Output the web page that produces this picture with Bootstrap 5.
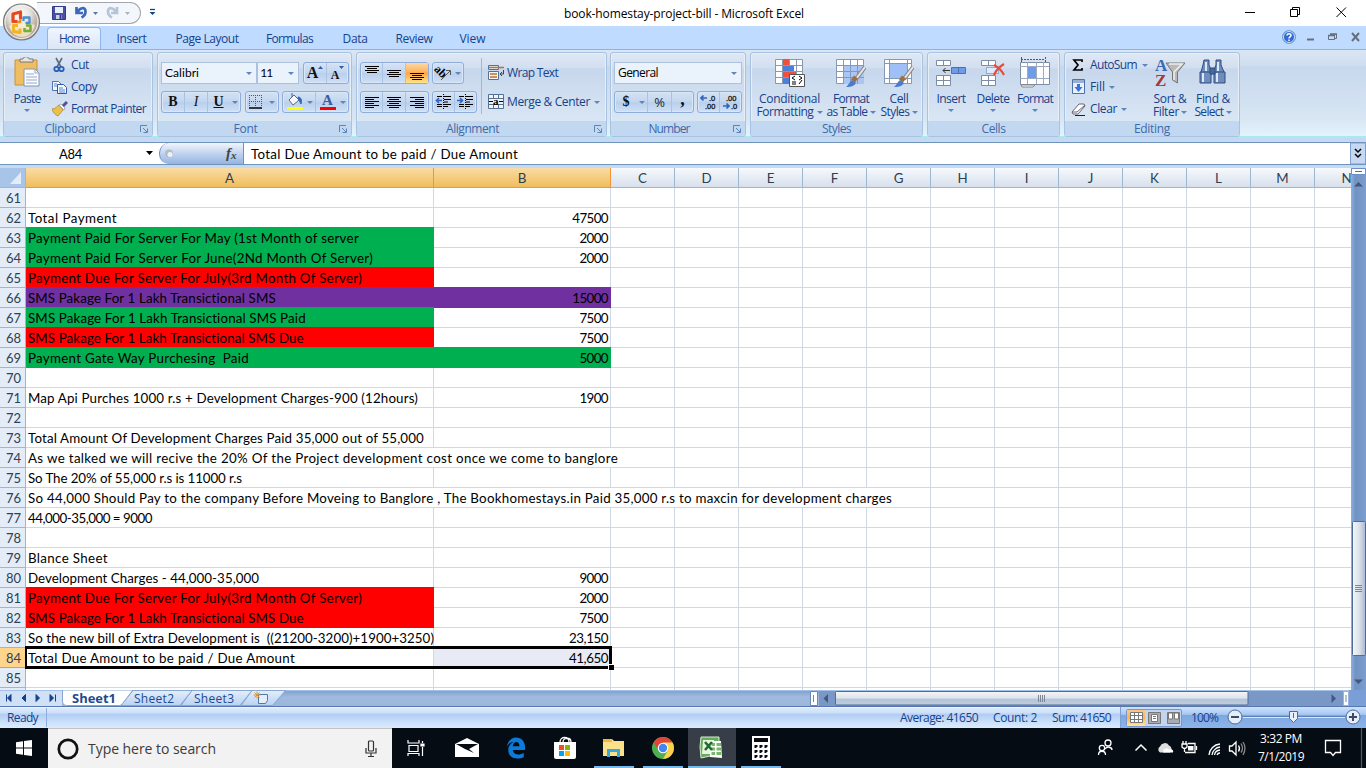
<!DOCTYPE html>
<html lang="en">
<head>
<meta charset="utf-8">
<title>book-homestay-project-bill - Microsoft Excel</title>
<link href="https://cdn.jsdelivr.net/npm/bootstrap@5.3.0/dist/css/bootstrap.min.css" rel="stylesheet">
<style>
body{width:1366px;height:768px;overflow:hidden;font:12px/14px "Open Sans","Noto Sans",sans-serif;color:#15428b;background:#fff}
svg{display:block;flex:none}
.fit{display:inline-block;white-space:nowrap;text-align:left}
.titlebar{height:26px;color:#000}
.orb{left:2px;top:2px;z-index:5}
.qat{width:104px;height:22px;margin:2px 0 0 37px;border:1px solid #a3a6ad;border-radius:0 12px 12px 0;background:#f3f6fb;border-left:0}
.apptabs{height:23px;background:#bfdbff}
.apptab{height:23px;padding-top:6px;text-align:center}
.apptab.on{height:22px;margin-top:1px;padding-top:4px;border:1px solid #8fb4e6;border-bottom:0;border-radius:4px 4px 0 0;background:linear-gradient(#eff6fe,#dbe7f6)}
.ribbon{height:89px;padding:2px 0 0 3px;gap:4px;background:linear-gradient(#dbe6f4,#cfddef 18%,#c7d8ed 19%,#d8e6f4 80%,#e3f4fd);border-top:1px solid #8db2e3;border-bottom:2px solid #a7eaf3}
.grp{height:85px;border:1px solid #a8c2e2;border-radius:3px;background:linear-gradient(#dfe8f5,#d2dff0 18%,#c7d7ec 19%,#d9e6f4 82%);box-shadow:inset 0 0 0 1px #e6eef8}
.grp .body{height:68px}
.grp .cap{height:15px;background:#c1d8f0;color:#3e6aaa;text-align:center;line-height:16px;position:relative;border-radius:0 0 3px 3px}
.launch{position:absolute;right:4px;top:4px}
.big{text-align:center;padding-top:4px;line-height:13px}
.big svg{margin:0 auto 3px}
.tri{display:inline-block;border:3px solid transparent;border-top:3px solid #5d86bd;border-bottom:0;vertical-align:middle;flex:none}
.sm{height:22px;display:flex;align-items:center}
.combo{height:22px;background:#eaf2fb;border:1px solid #abc1de;color:#000;display:flex;align-items:center;justify-content:space-between;padding:0 4px 0 3px}
.bg{height:22px;display:flex;border:1px solid #8eaddb;border-radius:3px;background:linear-gradient(#d4e2f4,#c3d6ef 50%,#b9cfec 51%,#cfe0f5);box-shadow:inset 0 0 0 1px #d9e7f8}
.bg>span{display:flex;align-items:center;justify-content:center;border-right:1px solid #a9c3e5}
.bg>span:last-child{border-right:0}
.bg>span.nb{border-right:0}
.bg .hot{background:linear-gradient(#fdd9a5,#fdb25c 45%,#fca43c 50%,#ffe48a)}
.ser{font-family:"Liberation Serif",serif;color:#111}
.sans{font-family:"Lato","Liberation Sans",sans-serif}
.fbar{height:30px;background:#c5d9f1;padding:4px 0 4px;color:#000}
.fbar .in{height:23px;border-top:1px solid #6e93bd;border-bottom:1px solid #6e93bd;background:#fff}
.fxbox{width:85px;height:21px;border-radius:10px 0 0 10px;background:linear-gradient(#f0f5fc,#b7cdec 60%,#95b4df);border-left:1px solid #6f8fc0;border-right:1px solid #6e93bd}
.sheet{height:522px;overflow:hidden;font-family:"Lato","Liberation Sans",sans-serif;font-size:13.33px;color:#000}
.xrow{display:grid;grid-template-columns:26px 408px 177px repeat(11,64px) 64px;height:20px;width:1443px}
.xrow>div{border-right:1px solid #d0d7e5;border-bottom:1px solid #d0d7e5;line-height:20px;height:20px;white-space:pre;padding-left:2px}
.xrow>.rh{background:#e4ecf7;border-color:#9eb6ce;color:#2d4152;padding:0 4px 0 0;text-align:right;font-size:13px}
.xrow>.rh.sel{background:#ffd58d;border-color:#f29536}
.hdr>div{background:linear-gradient(#f6f9fc,#d8e0ec);border-color:#9eb6ce!important;text-align:center;color:#2d4152;padding:0}
.hdr>.sel{background:linear-gradient(#f9dca5,#f0bd5c);border-color:#f29536!important}
.hdr>.corner{background:#a9c4e9;padding:0}
.xrow>.num{text-align:right;padding-right:2px}
.xrow>.fill{margin-top:-1px;height:21px;border:0;padding-top:1px}
.xrow>.num.fill{padding-right:3px}
.green{background:#00b050}.redc{background:#f00}.purp{background:#7030a0}
.selbox{left:25px;top:478px;width:587px;height:23px;border:3px solid #000;border-left-width:2px;z-index:2}
.selbox i{position:absolute;right:-5px;bottom:-4px;width:6px;height:6px;background:#000;border:1px solid #fff;border-right:0;border-bottom:0}
.vs{width:15px;height:522px;background:linear-gradient(90deg,#8fb0dd,#6f93c4 30%,#7c9dcd)}
.hs{height:17px;background:linear-gradient(#7c9fce,#9fb9df 40%,#9db6dc)}
.status{height:21px;background:linear-gradient(#fff 0,#dceafc 1px,#cde0f8 28%,#b1cdf3 35%,#c9dffb 70%,#dcebfd);font-size:12px}
.zoombar{width:246px;height:21px;background:linear-gradient(#cfe2fb,#a7c8f3 35%,#7fa8e0 40%,#8db4ea);border-left:1px solid #7d9fd1}
.views{width:56px;height:18px;border:1px solid #7795c9;border-radius:2px;background:#c3d5ee}
.task{height:40px;background:#060c14;color:#fff}
.search{width:344px;height:40px;background:#f2f2f2;border-top:1px solid #c4c4c4;color:#3b3b3b}
.ti{width:49px;height:40px;display:flex;align-items:center;justify-content:center;position:relative}
.ti svg{margin-right:2px}
.ti.run:after{content:"";position:absolute;left:4px;right:5px;bottom:0;height:2px;background:#76b9ed}
.ti.act{background:#383e48;width:48px}.ti.act:after{left:0;right:0}
</style>
</head>
<body class="d-flex flex-column position-relative">

<!-- Office button -->
<div class="orb position-absolute">
<svg width="40" height="40" viewBox="0 0 40 40"><defs><radialGradient id="ob" cx=".45" cy=".3"><stop offset="0" stop-color="#fff"/><stop offset=".6" stop-color="#e6e2de"/><stop offset="1" stop-color="#b9aea4"/></radialGradient></defs>
<circle cx="19.500" cy="20" r="18" fill="url(#ob)" stroke="#77797c" stroke-width="1.200"/><circle cx="19.500" cy="20" r="16.500" fill="none" stroke="#f7f4ee" stroke-width="1"/>
<path d="M7 24c4-3 20-4 26-1-2 8-7 12-13 12S9 31 7 24z" fill="#fff3c9" opacity=".7"/>
<g fill="none" stroke-linejoin="round"><path d="M15.500 19.500h-4.500v-7.500l7.500-2v7" stroke="#e8491b" stroke-width="3.200"/><path d="M15 20h3l.5-3" stroke="#f08a1c" stroke-width="2.400"/><path d="M21.500 19v-3.500h6v5.500h-4" stroke="#4b8fd0" stroke-width="2.300"/><path d="M16 23.500h-4.500v6l6.500 1v-4" stroke="#f5b31c" stroke-width="2.800"/><path d="M24 23.500h4.500v5.500h-6v-3" stroke="#79ab3c" stroke-width="2.500"/></g></svg>
</div>

<!-- Title bar -->
<header class="titlebar d-flex">
<div class="qat d-flex align-items-center flex-shrink-0">
<svg width="104" height="20" viewBox="37 3 104 20"><path d="M52.500 6.500h13v13h-13z" fill="#4a50a8" stroke="#333a8c"/><path d="M55 7h8v6h-8z" fill="#e9edf7"/><path d="M56 15h6v4h-6z" fill="#ccd2e8"/><path d="M59.500 15h2v4h-2z" fill="#333a8c"/>
<path d="M76.500 7v6h6.500M77.500 12.500c2-5 8-6 8-1 0 3-2 5-4 6" fill="none" stroke="#3b68b8" stroke-width="2.700"/><path d="M93 12h5l-2.500 3z" fill="#5878a8"/>
<path d="M117 7v6h-6M116 12.500c-2-5-8-6-8-1 0 3 2 5 4 6" fill="none" stroke="#b6c4d9" stroke-width="2.700"/><path d="M125 12h5l-2.500 3z" fill="#a9b3c3"/></svg>
</div>
<svg class="ms-2" width="8" height="26" viewBox="149 0 8 26"><path d="M150 9.500h5" stroke="#15428b" stroke-width="1.300"/><path d="M149.500 12h6l-3 3z" fill="#15428b"/></svg>
<div style="margin-left:407px" class="pt-2 flex-grow-1"><span class="fit" data-w="240" style="position:relative;top:-1px">book-homestay-project-bill - Microsoft Excel</span></div>
<svg width="128" height="26" viewBox="1238 0 128 26" fill="none" stroke="#000"><path d="M1245 12.500h10M1290.500 9.500h7v7h-7zM1292.500 9v-1.500h7v7H1298M1336.500 7.500l9.500 9.500M1346 7.500l-9.500 9.500"/></svg>
</header>

<!-- Ribbon tabs -->
<nav class="apptabs d-flex flex-shrink-0">
<div class="apptab on" style="margin-left:47px;width:54px"><span class="fit" data-w="30">Home</span></div>
<div class="apptab" style="width:61px"><span class="fit" data-w="30">Insert</span></div>
<div class="apptab" style="width:90px"><span class="fit" data-w="63">Page Layout</span></div>
<div class="apptab" style="width:75px"><span class="fit" data-w="47">Formulas</span></div>
<div class="apptab" style="width:56px"><span class="fit" data-w="25">Data</span></div>
<div class="apptab" style="width:62px"><span class="fit" data-w="37">Review</span></div>
<div class="apptab" style="width:55px"><span class="fit" data-w="26">View</span></div>
<svg class="ms-auto" width="88" height="23" viewBox="1278 26 88 23"><circle cx="1289" cy="37" r="6.500" fill="#2f6bd0" stroke="#7aa0d8"/><circle cx="1289" cy="37" r="5.500" fill="none" stroke="#cfe0fa"/><path d="M1287 35.500c0-2.500 4-2.500 4 0 0 1.500-2 1.300-2 3M1289 39.500v1.500" stroke="#fff" stroke-width="1.500" fill="none"/><g stroke="#66707c" fill="none"><path d="M1307 39.500h7" stroke-width="2"/><path d="M1328.500 35.500h6v4h-6zM1330.500 34.500h6v4H1335" /><path d="M1328 35.500h7M1330 34h7" stroke-width="1.500"/><path d="M1352 33l7 8M1359 33l-7 8" stroke-width="2"/></g></svg>
</nav>

<!-- Ribbon -->
<section class="ribbon d-flex flex-shrink-0">
<div class="grp flex-shrink-0" style="width:150px">
<div class="body d-flex">
<div class="big" style="width:46px"><svg width="32" height="32" viewBox="0 0 32 32"><path d="M4 3h22v25H4z" fill="#efbe62" stroke="#c7923c"/><path d="M9 5V2h3c0-3 6-3 6 0h4v3z" fill="#e5e5e6" stroke="#777"/><path d="M13 12h11l4 4v13H13z" fill="#fafcff" stroke="#8296b6"/><path d="M24 12v4h4M15 17h8m-8 3h11m-11 3h11m-11 3h11" fill="none" stroke="#9aaac5"/></svg><span class="fit" data-w="27">Paste</span><br><i class="tri" style="margin-top:-5px"></i></div>
<div style="padding:1px 0 0 2px">
<div class="sm"><svg width="16" height="16" viewBox="0 0 16 16" fill="none"><path d="M4 1l5 9M10 1L5 10" stroke="#5d6b7c" stroke-width="1.600"/><circle cx="4.500" cy="12" r="2.200" stroke="#2b5fb3" stroke-width="1.800"/><circle cx="9.500" cy="12" r="2.200" stroke="#2b5fb3" stroke-width="1.800"/></svg><span class="fit" style="margin-left:3px" data-w="18">Cut</span></div>
<div class="sm"><svg width="16" height="16" viewBox="0 0 16 16"><path d="M.5 2.500h6l3 3v6h-9z" fill="#f3f8ff" stroke="#4e73ad"/><path d="M5.500 5.500h6l3 3v6h-9z" fill="#f3f8ff" stroke="#2f5aa5"/><path d="M2 5h3M2 7h3M7 9h4m-4 2h6m-6 2h6" stroke="#5b87cc"/></svg><span class="fit" style="margin-left:3px" data-w="26">Copy</span></div>
<div class="sm"><svg width="16" height="16" viewBox="0 0 16 16"><path d="M0 8c4 0 5-3 7-4l4 5-5 6c-3-1-5-4-6-7z" fill="#e9c14f" stroke="#b28b26" stroke-width=".8"/><path d="M7 4l5 5 1-2-4-4z" fill="#fff" stroke="#8c8c8c" stroke-width=".7"/><path d="M11 5l4-4" stroke="#5550a0" stroke-width="3"/></svg><span class="fit" style="margin-left:3px" data-w="75">Format Painter</span></div>
</div></div>
<div class="cap"><span class="fit" data-w="51" style="margin-right:16px">Clipboard</span><svg class="launch" width="8" height="8"><path d="M.5 7V.5H7M3 3l4 4M7.500 3.500v4h-4" fill="none" stroke="#5c84b6"/></svg></div>
</div>

<div class="grp flex-shrink-0" style="width:195px">
<div class="body" style="padding:9px 2px 0 3px">
<div class="d-flex">
<div class="combo sans" style="width:97px"><span class="fit" data-w="34">Calibri</span><i class="tri"></i></div>
<div class="combo" style="width:42px;padding-left:2px"><span class="fit sans" data-w="12">11</span><i class="tri"></i></div>
<div class="bg" style="width:46px;margin-left:4px"><span class="ser fw-bold" style="width:23px;font-size:16px">A<svg width="5" height="14"><path d="M0 3h5L2.500 0z" fill="#2d5fa8"/></svg></span><span class="ser fw-bold" style="width:21px;font-size:12px;padding-top:3px">A<svg width="5" height="18"><path d="M0 0h5L2.500 3z" fill="#2d5fa8"/></svg></span></div>
</div>
<div class="d-flex" style="margin-top:7px">
<div class="bg ser" style="width:80px;font-size:14px"><span class="fw-bold" style="width:23px">B</span><span class="fst-italic" style="width:23px">I</span><span class="fw-bold text-decoration-underline nb" style="width:21px">U</span><span style="width:11px"><i class="tri"></i></span></div>
<div class="bg" style="width:34px;margin-left:4px"><span class="nb" style="width:20px"><svg width="14" height="14"><path d="M.5 0v12M6.500 0v12M12.500 0v12M0 .5h13M0 6.500h13" stroke="#555" stroke-dasharray="1 1"/><path d="M0 13h13" stroke="#000" stroke-width="1.500"/></svg></span><span style="width:12px"><i class="tri"></i></span></div>
<div class="bg" style="width:67px;margin-left:3px"><span class="nb" style="width:22px"><svg width="17" height="18"><path d="M3 7l5-5 5 5-6 5z" fill="#f6f8fb" stroke="#5c6b80"/><path d="M6 4V0M12 4c3 0 4 3 3 7l-2-4z" fill="#3067b6" stroke="#3067b6"/><path d="M1 14h16v3H1z" fill="#ff0"/></svg></span><span style="width:11px"><i class="tri"></i></span><span class="nb" style="width:22px"><svg width="17" height="18"><text x="3" y="12" font-family="Liberation Serif" font-weight="bold" font-size="15" fill="#365f9e">A</text><path d="M1 14h16v3H1z" fill="red"/></svg></span><span style="width:10px"><i class="tri"></i></span></div>
</div></div>
<div class="cap"><span class="fit" data-w="24" style="margin-right:18px">Font</span><svg class="launch" width="8" height="8"><path d="M.5 7V.5H7M3 3l4 4M7.500 3.500v4h-4" fill="none" stroke="#5c84b6"/></svg></div>
</div>

<div class="grp flex-shrink-0" style="width:251px">
<div class="body d-flex" style="padding:9px 2px 0 3px">
<div>
<div class="d-flex">
<div class="bg" style="width:69px"><span style="width:22px"><svg width="14" height="16" stroke="#000"><path d="M0 1.500h14M2 3.500h10M0 5.500h14M2 7.500h10"/></svg></span><span style="width:23px"><svg width="14" height="16" stroke="#000"><path d="M0 5.500h14M2 7.500h10M0 9.500h14M2 11.500h10"/></svg></span><span class="hot" style="width:22px"><svg width="14" height="16" stroke="#000"><path d="M0 8.500h14M2 10.500h10M0 12.500h14M2 14.500h10"/></svg></span></div>
<div class="bg" style="width:32px;margin-left:3px"><span class="nb" style="width:19px"><svg width="18" height="18"><text transform="rotate(45 3 5)" x="1" y="8" font-family="Liberation Serif" font-weight="bold" font-size="12">ab</text><path d="M7 16l9-9M12 6.500h4.500V11" stroke="#555" fill="none"/></svg></span><span style="width:11px"><i class="tri"></i></span></div></div>
<div class="d-flex" style="margin-top:7px">
<div class="bg" style="width:69px"><span style="width:22px"><svg width="14" height="13" stroke="#000"><path d="M0 1.500h14M0 3.500h9M0 5.500h14M0 7.500h9M0 9.500h14M0 11.500h9"/></svg></span><span style="width:23px"><svg width="14" height="13" stroke="#000"><path d="M0 1.500h14M2 3.500h10M0 5.500h14M2 7.500h10M0 9.500h14M2 11.500h10"/></svg></span><span style="width:22px"><svg width="14" height="13" stroke="#000"><path d="M0 1.500h14M5 3.500h9M0 5.500h14M5 7.500h9M0 9.500h14M5 11.500h9"/></svg></span></div>
<div class="bg" style="width:45px;margin-left:3px"><span style="width:22px"><svg width="17" height="16" stroke="#000"><path d="M2 2.500h5M9 2.500h7M9 5.500h7M9 8h4M2 10.500h5M9 10.500h7M2 12.500h5M9 12.500h4"/><path d="M8.500 0v15" stroke-dasharray="1 1"/><path d="M7 6.500H1m3-2.500L1.500 6.500 4 9" stroke="#2f63bd" stroke-width="1.600" fill="none"/></svg></span><span style="width:21px"><svg width="17" height="16" stroke="#000"><path d="M2 2.500h5M9 2.500h7M9 5.500h7M9 8h4M2 10.500h5M9 10.500h7M2 12.500h5M9 12.500h4"/><path d="M8.500 0v15" stroke-dasharray="1 1"/><path d="M0 6.500h6M3 4l2.500 2.500L3 9" stroke="#2f63bd" stroke-width="1.600" fill="none"/></svg></span></div></div>
</div>
<div style="margin:-4px 0 0 4px;width:1px;height:56px;background:#9cb8da"></div>
<div style="margin-left:6px">
<div class="sm"><svg width="17" height="16"><path d="M.5.500h10v4H.5zM.5 6.500h10v8H.5z" fill="#eef4fc" stroke="#56708f"/><path d="M1 2.500h15M2 9h7M2 12h7" stroke="#c06f2d" stroke-width="1.300"/><path d="M15.500 5v4H12M14 7l-2 2 2 2" stroke="#345" fill="none"/></svg><span class="fit" data-w="51" style="margin-left:2px">Wrap Text</span></div>
<div class="sm" style="margin-top:7px"><svg width="17" height="16"><path d="M.5.500h15v14H.5zM.5 4.500h15M.5 10.500h15M5.500.500v4M10.500.500v4M5.500 10.500v4M10.500 10.500v4" fill="#eef4fc" stroke="#56708f"/><path d="M1 7.500h4M11 7.500h4" stroke="#000"/><text x="5" y="10.500" font-family="Liberation Serif" font-weight="bold" font-size="11">a</text></svg><span class="fit" data-w="83" style="margin:0 4px 0 2px">Merge &amp; Center</span><i class="tri"></i></div>
</div></div>
<div class="cap"><span class="fit" data-w="53" style="margin-right:18px">Alignment</span><svg class="launch" width="8" height="8"><path d="M.5 7V.5H7M3 3l4 4M7.500 3.500v4h-4" fill="none" stroke="#5c84b6"/></svg></div>
</div>

<div class="grp flex-shrink-0" style="width:136px;margin-left:-1px">
<div class="body" style="padding:9px 2px 0 3px">
<div class="combo" style="width:128px"><span class="fit" data-w="40">General</span><i class="tri"></i></div>
<div class="d-flex" style="margin-top:7px">
<div class="bg" style="width:80px"><span class="nb ser fw-bold" style="width:22px;font-size:14px">$</span><span style="width:11px"><i class="tri"></i></span><span style="width:24px;font-size:13px;color:#222">%</span><span class="ser fw-bold" style="width:21px;font-size:18px;padding-bottom:7px">,</span></div>
<div class="bg" style="width:45px;margin-left:3px"><span style="width:22px"><svg width="18" height="16" font-family="Liberation Sans" font-size="7.500" stroke="#222" stroke-width=".3"><text x="9" y="7">.0</text><text x="5" y="15">.00</text><path d="M1 4h6M3.500 1.500L1 4l2.500 2.500" stroke="#2f63bd" stroke-width="1.700" fill="none"/></svg></span><span style="width:21px"><svg width="18" height="16" font-family="Liberation Sans" font-size="7.500" stroke="#222" stroke-width=".3"><text x="4" y="7">.00</text><text x="9" y="15">.0</text><path d="M1 12h6M4.500 9.500L7 12l-2.500 2.500" stroke="#2f63bd" stroke-width="1.700" fill="none"/></svg></span></div></div></div>
<div class="cap"><span class="fit" data-w="41" style="margin-right:18px">Number</span><svg class="launch" width="8" height="8"><path d="M.5 7V.5H7M3 3l4 4M7.500 3.500v4h-4" fill="none" stroke="#5c84b6"/></svg></div>
</div>

<div class="grp flex-shrink-0" style="width:173px">
<div class="body d-flex" style="margin-right:-2px">
<div class="big" style="width:75px;padding-left:2px"><svg width="30" height="32"><path d="M.5 2.500h27v24H.5z" fill="#fff" stroke="#8698b2"/><path d="M7.500 2v25M14.500 2v25M21.500 2v25M0 8.500h28M0 14.500h28M0 20.500h28" stroke="#8698b2"/><path d="M8 2h6v6H8zM8 15h13v5H8z" fill="#f0503a"/><path d="M8 9h11v5H8zM8 21h6v6H8z" fill="#4c7fdb"/><path d="M14.500 17.500h15v12h-15z" fill="#fff" stroke="#555"/><path d="M20 19l-3 2 3 2M17 25h4M17 27h4M24 19l3 2-3 2M24 27l3-4" fill="none" stroke="#000"/></svg><span class="fit" data-w="61">Conditional</span><br><span class="fit" data-w="57">Formatting</span> <i class="tri"></i></div>
<div class="big" style="width:50px"><svg width="30" height="32"><path d="M.5 2.500h27v24H.5z" fill="#fff" stroke="#8698b2"/><path d="M7 9h21v18H7z" fill="#a9c6f5"/><path d="M7.500 2v25M14.500 2v25M21.500 2v25M0 8.500h28M0 14.500h28M0 20.500h28" stroke="#7c99c8"/><path d="M29 10L20 22" stroke="#888" stroke-width="4"/><path d="M29 10L20 22" stroke="#e8e8e8" stroke-width="2"/><path d="M20 20l-3 4" stroke="#a0703c" stroke-width="5"/><path d="M16 23l4 3c-2 4-7 4-10 4 3-2 3-5 6-7z" fill="#4b7ccb"/></svg><span class="fit" data-w="36">Format</span><br><span class="fit" data-w="41">as Table</span> <i class="tri" style="margin-left:-1px"></i></div>
<div class="big" style="width:46px"><svg width="30" height="32"><path d="M.5 2.500h27v24H.5z" fill="#fff" stroke="#8698b2"/><path d="M5.500 2v25M23.500 2v25M0 6.500h28M0 21.500h28" stroke="#8698b2"/><path d="M6 7h17v14H6z" fill="#9fc0f7"/><path d="M29 10L20 22" stroke="#888" stroke-width="4"/><path d="M29 10L20 22" stroke="#e8e8e8" stroke-width="2"/><path d="M20 20l-3 4" stroke="#a0703c" stroke-width="5"/><path d="M16 23l4 3c-2 4-7 4-10 4 3-2 3-5 6-7z" fill="#4b7ccb"/></svg><span class="fit" data-w="19">Cell</span><br><span class="fit" data-w="29">Styles</span> <i class="tri" style="margin-left:-1px"></i></div>
</div>
<div class="cap"><span class="fit" data-w="29">Styles</span></div>
</div>

<div class="grp flex-shrink-0" style="width:133px">
<div class="body d-flex ps-1" style="margin-left:-2px">
<div class="big" style="width:42px"><svg width="30" height="32"><g fill="#fff" stroke="#7c8da5"><path d="M.5 3.500h14v5H.5zM7.500 3v6M.5 18.500h14v10H.5zM.5 23.500h14M7.500 18v11"/></g><path d="M15.500 10.500h14v6h-14z" fill="#6f9be8" stroke="#4d70b5"/><path d="M22.500 10v7" stroke="#4d70b5"/><path d="M7 13.500h7M9.500 11L7 13.500 9.500 16" stroke="#333" fill="none"/></svg><span class="fit" data-w="29">Insert</span><br><i class="tri" style="margin-top:-5px"></i></div>
<div class="big" style="width:42px"><svg width="28" height="32"><g fill="#fff" stroke="#7c8da5"><path d="M2.500 3.500h14v5h-14zM9.500 3v6M2.500 18.500h14v10h-14zM2.500 23.500h14M9.500 18v11"/></g><path d="M7.500 10.500h12v6h-12z" fill="#dfeafa" stroke="#4d70b5" stroke-dasharray="1 1"/><path d="M15 8c4 2 8 6 10 10M25 7c-5 3-8 6-10 11" stroke="#ea4b34" stroke-width="2.200" fill="none"/></svg><span class="fit" data-w="33">Delete</span><br><i class="tri" style="margin-top:-5px"></i></div>
<div class="big" style="width:42px"><svg width="32" height="32"><path d="M1.500 5.500h29v22h-29z" fill="#fff" stroke="#7c8da5"/><path d="M8.500 5v22M17.500 5v22M24.500 5v22M1 9.500h29M1 21.500h29" stroke="#9cabc0"/><path d="M9 10h8v11H9z" fill="#6f9be8"/><path d="M2 28h14l-2 2H3z" fill="#fff" stroke="#888"/><path d="M2 2.500h24M2.500 0v5M26.500 0v5" stroke="#556" stroke-dasharray="2 1"/></svg><span class="fit" data-w="36">Format</span><br><i class="tri" style="margin-top:-5px"></i></div>
</div>
<div class="cap"><span class="fit" data-w="24">Cells</span></div>
</div>

<div class="grp flex-shrink-0" style="width:176px">
<div class="body d-flex">
<div style="width:84px;padding:1px 0 0 6px">
<div class="sm"><svg width="16" height="16"><path d="M11 5V3H3l4 5-4 5h8v-2" fill="none" stroke="#000" stroke-width="1.700"/></svg><span class="fit" data-w="47" style="margin:0 5px 0 3px">AutoSum</span><i class="tri"></i></div>
<div class="sm"><svg width="16" height="16"><path d="M1.500.500h12v14h-12z" fill="#e8f0fb" stroke="#4c70aa"/><path d="M2 1h11v3H2z" fill="#4c70aa" opacity=".5"/><path d="M6 5h3v3h2.500l-4 5-4-5H6z" fill="#3b74d8"/></svg><span class="fit" data-w="15" style="margin:0 4px 0 3px">Fill</span><i class="tri"></i></div>
<div class="sm"><svg width="16" height="16"><path d="M1 11l7-8h5l1 2-7 8H2z" fill="#fff" stroke="#667"/><path d="M1 11h5l8-7" fill="none" stroke="#667"/><path d="M4 14.500h10" stroke="#222"/></svg><span class="fit" data-w="27" style="margin:0 4px 0 3px">Clear</span><i class="tri"></i></div>
</div>
<div class="big" style="width:42px"><svg width="32" height="32"><g font-family="Liberation Serif" font-weight="bold" font-size="17"><text x="1" y="14" fill="#3a68b8">A</text><text x="1" y="29" fill="#a33a36">Z</text></g><path d="M12 6h19L23.500 15v11l-5-3v-8z" fill="#b9b9b9" stroke="#777"/><path d="M15 7h13l-8 8v8" fill="none" stroke="#eee" stroke-width="1.500"/></svg><span class="fit" data-w="33">Sort &amp;</span><br><span class="fit" data-w="26">Filter</span> <i class="tri" style="margin-left:-1px"></i></div>
<div class="big" style="width:44px"><svg width="30" height="32"><g fill="#6f8dbb" stroke="#2f4d80"><path d="M6 3h5v5l2 5v5H3v-3l2-7zM18 3h5v5l3 7v3H16v-5l2-5z"/><path d="M2 15h11v11H2zM16 15h11v11H16z"/><path d="M12 11h5v6h-5z" fill="#49689c"/></g><path d="M5 16v9M8 5v9M19 16v9M20 5v9" stroke="#dce7f7" stroke-width="2"/></svg><span class="fit" data-w="34">Find &amp;</span><br><span class="fit" data-w="29">Select</span> <i class="tri" style="margin-left:-1px"></i></div>
</div>
<div class="cap"><span class="fit" data-w="36">Editing</span></div>
</div>
</section>

<!-- Formula bar -->
<section class="fbar flex-shrink-0">
<div class="in d-flex align-items-center sans">
<span class="fit" data-w="23" style="margin-left:59px;font-size:13px">A84</span>
<svg style="margin-left:63px" width="9" height="5"><path d="M1 0h7L4.500 4z"/></svg>
<div class="fxbox d-flex align-items-center" style="margin-left:5px"><svg width="83" height="20"><circle cx="9" cy="9.500" r="4" fill="#b3bccb"/><circle cx="10" cy="10.500" r="2.500" fill="#eef2f8"/><text x="66" y="14" font-family="Liberation Serif" font-style="italic" font-weight="bold" font-size="15" fill="#444">f</text><text x="71" y="15" font-family="Liberation Serif" font-style="italic" font-weight="bold" font-size="11" fill="#444">x</text></svg></div>
<span class="fit" data-w="267" style="margin-left:7px;font-size:13.330px">Total Due Amount to be paid / Due Amount</span>
<svg class="ms-auto" width="16" height="21"><path d="M.5 0h15v21H.5z" fill="#c6d9f2" stroke="#7f9fcc"/><path d="M5 6l3 3 3-3M5 11l3 3 3-3" stroke="#000" stroke-width="1.500" fill="none"/></svg>
</div></section>

<!-- Worksheet -->
<main class="d-flex flex-shrink-0">
<div class="sheet flex-grow-1 position-relative" style="width:1351px">
<div id="grid"></div>
<div class="selbox position-absolute"><i></i></div>
</div>
<svg class="vs" width="15" height="522"><defs><linearGradient id="vt"><stop offset="0" stop-color="#f4f6f9"/><stop offset=".5" stop-color="#dde3ec"/><stop offset="1" stop-color="#a9b8cd"/></linearGradient></defs><path d="M.5.500h14v6H.5z" fill="#fff" stroke="#6b8fc6"/><path d="M4 3.500h7" stroke="#4a6fa8"/><path d="M3 18.500h9L7.500 14zM3 511.500h9L7.500 516z" fill="#47577a"/><rect x="1.500" y="353.500" width="13" height="134" rx="1" fill="url(#vt)" stroke="#4f6c9c"/><path d="M4 417.500h7M4 419.500h7M4 421.500h7M4 423.500h7" stroke="#7d8797"/></svg>
</main>

<!-- Sheet tabs and horizontal scrollbar -->
<div class="hs flex-shrink-0">
<svg width="1366" height="17"><defs><linearGradient id="ht" x2="0" y2="1"><stop offset="0" stop-color="#f4f6f9"/><stop offset=".5" stop-color="#dce2eb"/><stop offset=".55" stop-color="#b4c3d8"/><stop offset="1" stop-color="#c0cddd"/></linearGradient><linearGradient id="tb" x2="0" y2="1"><stop offset="0" stop-color="#e2eefc"/><stop offset="1" stop-color="#bad2f3"/></linearGradient></defs>
<path d="M0 0h1351" stroke="#a3c0e8" stroke-width="2"/><path d="M0 1h62v15H0z" fill="#cfe0f7"/>
<path d="M6.500 4.500v7M11 4.500v7L7.500 8zM25.500 4.500v7L22 8zM36 4.500v7L39.500 8zM50 4.500v7L53.500 8zM55.500 4.500v7" fill="#15428b" stroke="#15428b"/>
<g stroke="#8aa7cf" fill="url(#tb)"><path d="M241 15.500l11-15h33.500l-13 15z"/><path d="M181 15.500l11-15h60l-12 15z"/><path d="M121 15.500l12-15h59l-12 15z"/></g>
<path d="M62.500 0v12q0 3.500 4 3.500h53q2 0 3-2L133 0z" fill="#fff" stroke="#8aa7cf"/>
<g font-family="Open Sans" font-size="12" fill="#1f4a90"><text x="72" y="12.500" font-weight="bold" textLength="44" lengthAdjust="spacingAndGlyphs">Sheet1</text><text x="134" y="12.500" textLength="40">Sheet2</text><text x="194" y="12.500" textLength="40">Sheet3</text></g>
<path d="M258.500 4.500h9v6l-2 3h-7z" fill="#e5edf8" stroke="#5577a8"/><path d="M257 1.500v7M253.500 5h7M254.500 2.500l5 5M259.500 2.500l-5 5" stroke="#e09526"/>
<path d="M819 1h532v15H819z" fill="#7998c6"/><path d="M810.500 1.500h7v14h-7z" fill="#fff" stroke="#6788b8"/><path d="M813.500 5v7" stroke="#6788b8"/><path d="M828 4v9l-4.500-4.500z" fill="#47577a"/><rect x="835.500" y="1.500" width="412.500" height="13.500" rx="1" fill="url(#ht)" stroke="#4f6c9c"/><path d="M1038.500 5v7M1040.500 5v7M1042.500 5v7M1044.500 5v7" stroke="#7d8797"/><path d="M1331.500 4v9l4.500-4.500z" fill="#47577a"/><path d="M1343.500 1.500h5v14h-5z" fill="#fff" stroke="#9ab6dd"/><path d="M1346 5v7" stroke="#6788b8"/><path d="M1349 0h17v17h-17z" fill="#7b9ed6"/><path d="M0 16.500h1366" stroke="#5578b0"/></svg>
</div>

<!-- Status bar -->
<div class="status d-flex align-items-center flex-shrink-0">
<span class="fit" data-w="31" style="margin-left:7px">Ready</span><div style="width:1px;height:19px;margin-left:8px;background:#8eaedb"></div>
<span class="fit" data-w="78" style="margin-left:853px">Average: 41650</span><span class="fit" data-w="44" style="margin-left:15px">Count: 2</span><span class="fit" data-w="59" style="margin-left:15px">Sum: 41650</span>
<div class="zoombar d-flex align-items-center ms-auto">
<div class="views" style="margin-left:5px"><svg width="54" height="16"><defs><linearGradient id="vo" x2="0" y2="1"><stop offset="0" stop-color="#f8c98a"/><stop offset=".5" stop-color="#f9b552"/><stop offset="1" stop-color="#ffe9a3"/></linearGradient></defs><path d="M0 0h18v16H0z" fill="url(#vo)"/><g fill="#fff" stroke="#777"><path d="M3.500 2.500h12v10h-12zM3.500 5.500h12M3.500 9.500h12M7.500 2v10M11.500 2v10"/><path d="M21.500 2.500h12v11h-12z" fill="#a9adb3"/><path d="M24.500 4.500h6v7h-6z"/><path d="M26 6.500h3M26 8.500h3"/><path d="M40.500 2.500h12v11h-12z" fill="#a9adb3"/><path d="M41.500 3v6h4V3zM47.500 3v6h4V3z"/></g></svg></div>
<span class="fit" data-w="27" style="margin-left:9px">100%</span>
<svg style="margin-left:8px" width="140" height="21" viewBox="1226 707 140 21"><g fill="#e4eefb" stroke="#4d6b98"><circle cx="1235" cy="717" r="7"/><circle cx="1353" cy="717" r="7"/></g><path d="M1231 717h8M1349 717h8M1353 713v8" stroke="#3f4a5c" stroke-width="2"/><path d="M1243 717.500h102" stroke="#d6e6fb"/><path d="M1243 716.500h102" stroke="#5e82b8"/><path d="M1289.500 711.500h8v7l-4 4-4-4z" fill="#e8f0fb" stroke="#4d6b98"/><path d="M1293.500 713v5" stroke="#4d6b98"/></svg>
</div></div>

<!-- Windows taskbar -->
<footer class="task d-flex flex-shrink-0">
<div style="width:48px" class="d-flex align-items-center justify-content-center"><svg width="16" height="16"><path d="M0 2.200l7-1v6.400H0zM8 1.100L16 0v7.600H8zM0 8.500h7v6.300l-7-1zM8 8.500h8V16l-8-1.100z" fill="#fff"/></svg></div>
<div class="search d-flex align-items-center"><svg style="margin-left:8px" width="24" height="24"><circle cx="12" cy="12" r="9.200" fill="none" stroke="#111" stroke-width="2.700"/></svg><span class="fit" data-w="128" style="margin-left:8px;font-size:14px">Type here to search</span><svg class="ms-auto" style="margin-right:14px" width="14" height="18" fill="none" stroke="#333" stroke-width="1.200"><rect x="4.500" y="1" width="5" height="10" rx="1"/><path d="M2 8v5h10V8M7 13v3M4 16.500h6"/></svg></div>
<div class="ti" style="margin-right:2px"><svg width="18" height="16" fill="none" stroke="#fff" stroke-width="1.200"><path d="M2 5.500h9v6H2zM1 0v3h11V0M1 16v-2.500h11V16M15.500 1v2M15.500 7v9"/><path d="M14 4h3v2h-3z" fill="#fff"/></svg></div>
<div class="ti"><svg width="26" height="22"><path d="M1 7l12-6 12 6v13H1z" fill="#fff"/><path d="M2 7h22l-9 5 5 4-9-4z" fill="#060c14"/></svg></div>
<div class="ti"><svg width="20" height="22" viewBox="0 0 22 22" preserveAspectRatio="none"><path d="M1 10C2 4 6 .5 11 .5c6 0 10 4 10 10v2.500H7.500c.3 3 3 4.500 6 4.500 2.500 0 4.500-.6 6-1.500v4.200C17.700 21 15 21.500 12.500 21.500c-6 0-10-3.500-10-8.500 0-3.800 2.200-6.500 6-8C4.500 5 2.500 7 1 10zm6.500-.8h7.300c0-2.700-1.200-4.200-3.400-4.200-2.300 0-3.600 1.700-3.900 4.200z" fill="#0b7ad9"/></svg></div>
<div class="ti"><svg width="24" height="24"><path d="M7 6c0-6 9-6 9 0M10 6c0-5 8-5 8 0" fill="none" stroke="#fff" stroke-width="1.300"/><path d="M1 6h22v15q0 2-2 2H3q-2 0-2-2z" fill="#fff"/><path d="M6 9h5v5H6z" fill="#f25022"/><path d="M12 9h5v5h-5z" fill="#7fba00"/><path d="M6 15h5v5H6z" fill="#00a4ef"/><path d="M12 15h5v5h-5z" fill="#ffb900"/></svg></div>
<div class="ti run"><svg width="22" height="20"><path d="M0 1h9l2 2h10v15H0z" fill="#fce18b"/><path d="M0 1h9v3H0z" fill="#edbb36"/><path d="M4 11h13v8h-3v-5H7v5H4z" fill="#36a9e1"/></svg></div>
<div class="ti run"><svg width="22" height="22" viewBox="0 0 22 22"><circle cx="11" cy="11" r="11" fill="#4caf50"/><path d="M1.500 5.500A11 11 0 0 1 20.500 5.500L11 6.500 7 14z" fill="#e04636"/><path d="M20.500 5.500A11 11 0 0 1 11 22l5-9-5-7.500z" fill="#fdd24a"/><circle cx="11" cy="11" r="5.300" fill="#fff"/><circle cx="11" cy="11" r="4.200" fill="#4285f4"/></svg></div>
<div class="ti run act" style="margin-right:1px"><svg width="24" height="24"><path d="M2 1h18v17l-18 4q-2-12 0-21z" fill="#65ab5c" stroke="#d7edcf"/><path d="M4 4h11v14H3z" fill="#e8f4e2"/><path d="M11 5h11l1 17-12-1z" fill="#fff"/><path d="M12.500 7h3.500v3h-3.500zM17.500 7H22v3h-4.500zM12.500 11.500h3.500v3h-3.500zM17.500 11.500H22v3h-4.500zM12.500 16h3.500v3h-3.500zM17.500 16H22v3h-4.500z" fill="#77b96b"/><path d="M6 6l7 8M13 6L6 14" stroke="#1f6f2c" stroke-width="2.600"/></svg></div>
<div class="ti run"><svg width="20" height="24"><path d="M1 0h18v24H1z" fill="#fff"/><path d="M3 2h14v4H3zM3.500 9h3v2h-1v1h-2zM8.500 9h3v2h-1v1h-2zM13.500 9h3v2h-1v1h-2zM3.500 14h3v2h-1v1h-2zM8.500 14h3v2h-1v1h-2zM13.500 14h3v2h-1v1h-2zM3.500 19h3v2h-1v1h-2zM8.500 19h3v2h-1v1h-2zM13.500 19h3v2h-1v1h-2z" fill="#060c14"/></svg></div>
<svg class="ms-auto" width="162" height="40" viewBox="1092 728 162 40" fill="none" stroke="#fff" stroke-width="1.300"><circle cx="1102" cy="748" r="2.700"/><path d="M1098.500 755c0-5 7-5 7 0"/><circle cx="1108" cy="743" r="3"/><path d="M1105 749c2-3 7-2 7 1"/><path d="M1135.500 750.500l5.500-5.500 5.500 5.500" stroke-width="1.500"/><path d="M1160 752.500a3.500 3.500 0 0 1 0-6 5 5 0 0 1 9-1 4 4 0 0 1 1 7z" fill="#ddd" stroke="none"/><path d="M1163 752.500c0-4 4-5 6-3 3-1 5 1 4 3z" fill="#fff" stroke="none"/><path d="M1188 743.500h7v9h-10"/><path d="M1188 746h5.500v4.500h-5.500z" fill="#fff" stroke="none"/><path d="M1196.500 746v4M1182 744h5v3q-2.500 3-5 0zM1183 744v-3M1186 744v-3M1184.500 748v4"/><path d="M1209 755a12 12 0 0 1 11-11M1212 755a9 9 0 0 1 8-8M1214.500 755a6 6 0 0 1 5.500-5M1217 755a3 3 0 0 1 3-2"/><path d="M1229.500 746h2.500l4-4v13l-4-4h-2.500zM1238.500 745.500q2 3 0 6"/><path d="M1241 743.500q3 5 0 9M1243 742q4 6 0 13" stroke="#888"/></svg>
<div class="d-flex flex-column justify-content-center" style="width:60px;line-height:18px;padding-left:4px;font-size:12px"><span class="ps-1" style="height:18px"><span class="fit" data-w="42" style="margin-left:-2px">3:32 PM</span></span><span style="height:18px"><span class="fit" data-w="46">7/1/2019</span></span></div>
<svg width="52" height="40" viewBox="1314 728 52 40" fill="none" stroke="#fff" stroke-width="1.300"><path d="M1325.500 740.500h15v12h-5l-2.500 3-2.500-3h-5z"/><path d="M1361.500 728v40" stroke="#555"/></svg>
</footer>

<script>
// Worksheet rows: number, text, text width, fill of A, value, fill of B, columns spilled into
const rows=[[61],[62,'Total Payment',89,'','47500'],
[63,'Payment Paid For Server For May (1st Month of server',331,'green','2000'],
[64,'Payment Paid For Server For June(2Nd Month Of Server)',345,'green','2000'],
[65,'Payment Due For Server For July(3rd Month Of Server)',334,'redc',''],
[66,'SMS Pakage For 1 Lakh Transictional SMS',248,'purp','15000','purp'],
[67,'SMS Pakage For 1 Lakh Transictional SMS Paid',278,'green','7500'],
[68,'SMS Pakage For 1 Lakh Transictional SMS Due',276,'redc','7500'],
[69,'Payment Gate Way Purchesing  Paid',221,'green','5000','green'],[70],
[71,'Map Api Purches 1000 r.s + Development Charges-900 (12hours)',390,'','1900'],[72],
[73,'Total Amount Of Development Charges Paid 35,000 out of 55,000',396,''],
[74,'As we talked we will recive the 20% Of the Project development cost once we come to banglore',590,'','','',3],
[75,'So The 20% of 55,000 r.s is 11000 r.s',214,''],
[76,'So 44,000 Should Pay to the company Before Moveing to Banglore , The Bookhomestays.in Paid 35,000 r.s to maxcin for development charges',864,'','','',7],
[77,'44,000-35,000 = 9000',124,''],[78],[79,'Blance Sheet',80,''],
[80,'Development Charges - 44,000-35,000',231,'','9000'],
[81,'Payment Due For Server For July(3rd Month Of Server)',334,'redc','2000'],
[82,'SMS Pakage For 1 Lakh Transictional SMS Due',276,'redc','7500'],
[83,'So the new bill of Extra Development is  ((21200-3200)+1900+3250)',406,'','23,150'],
[84,'Total Due Amount to be paid / Due Amount',267,'','41,650'],[85],['']];
let h='<div class="xrow hdr"><div class="corner"><svg width="25" height="19"><path d="M21 4v12H10z" fill="#e3edfa"/></svg></div>';
'ABCDEFGHIJKLMN'.split('').forEach((c,i)=>h+=`<div class="${i<2?'sel':''}">${c}</div>`);
h+='</div>';
for(const [n,t='',w,f='',v='',g='',s=1] of rows){
  h+=`<div class="xrow"><div class="rh ${n===84?'sel':''}">${n}</div><div class="${f?'fill '+f:''}" style="grid-column:span ${s}">${t?`<span class="fit" style="white-space:pre" data-w="${w}">${t}</span>`:''}</div>`;
  for(let c=s;c<14;c++)h+=c===1?`<div class="num ${g?'fill '+g:''}"${n===84?' style="background:#e8ebf5"':''}>${v?`<span class="fit" data-w="${v.length===6?39:v.length*7.15}">${v}</span>`:''}</div>`:'<div></div>';
  h+='</div>';
}
document.getElementById('grid').innerHTML=h;
document.querySelectorAll('.fit').forEach(e=>{
  const n=e.textContent.length;
  e.style.letterSpacing=((e.dataset.w-e.getBoundingClientRect().width)/n).toFixed(3)+'px';
});
</script>
<script src="https://cdn.jsdelivr.net/npm/bootstrap@5.3.0/dist/js/bootstrap.bundle.min.js"></script>
</body>
</html>
